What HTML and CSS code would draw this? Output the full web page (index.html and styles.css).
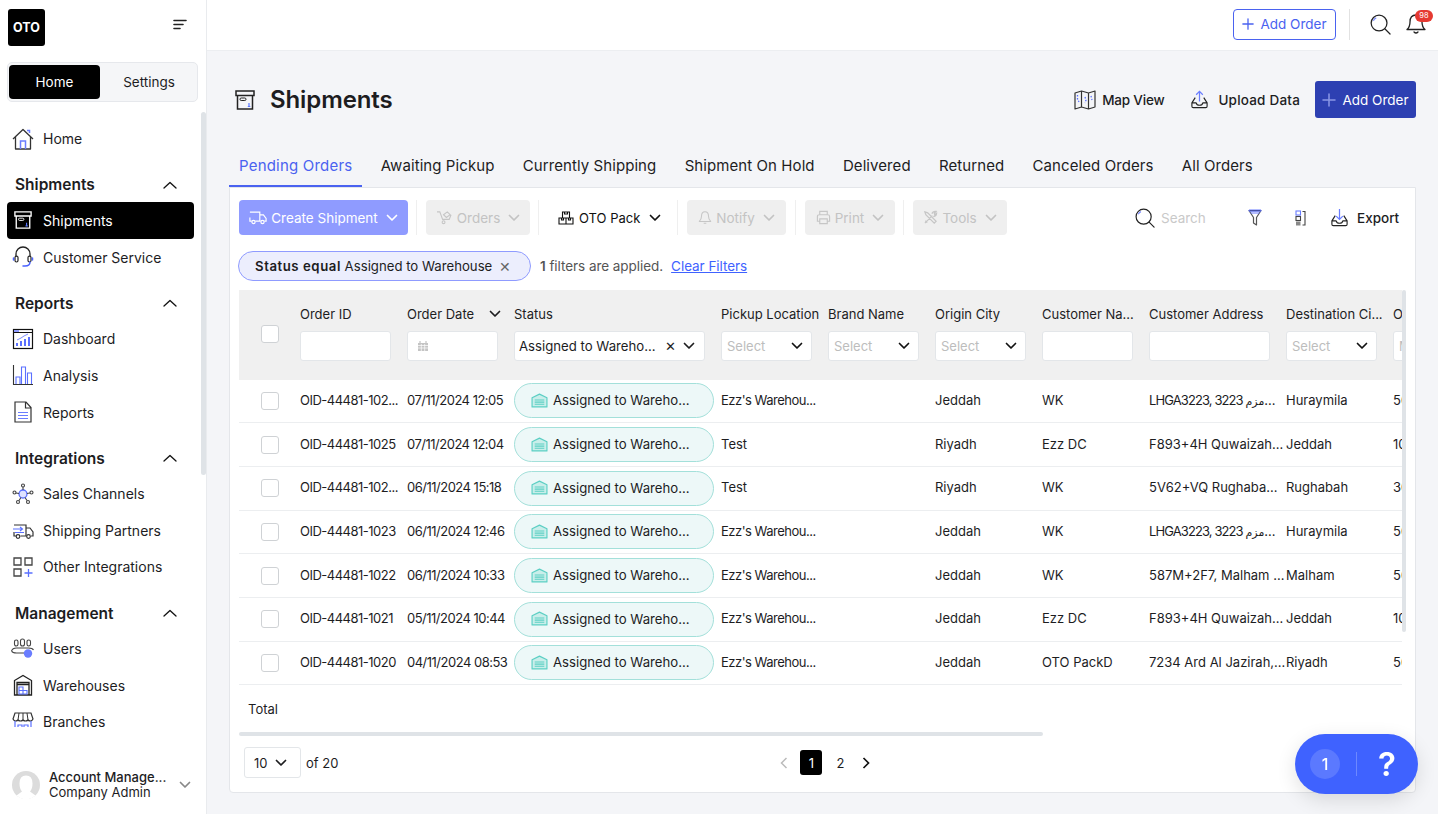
FILE: index.html
```html
<!DOCTYPE html>
<html lang="en">
<head>
<meta charset="utf-8">
<title>Shipments</title>
<link rel="stylesheet" href="styles.css">
</head>
<body>
<svg class="sprite" xmlns="http://www.w3.org/2000/svg">
  <symbol id="chev-d" viewBox="0 0 12 8"><path d="M1.500 1.500 6 6l4.500-4.500" fill="none" stroke="currentColor" stroke-width="1.700" stroke-linecap="round" stroke-linejoin="round"/></symbol>
  <symbol id="chev-u" viewBox="0 0 14 8"><path d="M1 7 7 1.500 13 7" fill="none" stroke="currentColor" stroke-width="1.300" stroke-linecap="round" stroke-linejoin="round"/></symbol>
  <symbol id="wh" viewBox="0 0 16 14"><path d="M1 4.500 8 1l7 3.500V13H1z" fill="#c9eeea" stroke="#5ccfc4" stroke-width="1.100" stroke-linejoin="round"/><path d="M3.500 6.500h9M3.500 8.500h9M3.500 10.500h9" stroke="#5ccfc4" stroke-width="1"/></symbol>
  <symbol id="box" viewBox="0 0 20 20"><path d="M1 1h18v4.500H1zM2.500 5.500h15V19h-15z" fill="none" stroke="currentColor" stroke-width="1.500"/><rect x="5" y="8" width="6" height="2.500" rx="1.200" fill="none" stroke="currentColor" stroke-width="1"/><path d="M14 13v3.500M12.800 16.500h2.500" stroke="#5a78ff" stroke-width="1.200"/></symbol>
  <symbol id="search" viewBox="0 0 22 22"><circle cx="9.500" cy="9.500" r="8.300" fill="none" stroke="#222" stroke-width="1.300"/><path d="m15.500 15.500 5.500 5.500" stroke="#222" stroke-width="1.300" stroke-linecap="round"/><path d="M3.500 7a6.500 6.500 0 0 1 3-3" stroke="#7c8cff" stroke-width="1.300" fill="none"/></symbol>
  <symbol id="plus" viewBox="0 0 14 14"><path d="M7 1v12M1 7h12" stroke="currentColor" stroke-width="1.500" stroke-linecap="round"/></symbol>
  <symbol id="tray" viewBox="0 0 20 20"><path d="M5.500 8 2 13.500V17q0 1.500 1.500 1.500h13q1.500 0 1.500-1.500v-3.500L14.500 8M2 13.500h4.500q.5 2.500 3.500 2.500t3.500-2.500H18" fill="none" stroke="#222" stroke-width="1.200" stroke-linejoin="round"/></symbol>
</svg>

<div class="app">
  <aside class="sidebar">
    <div class="brand">
      <div class="logo">OTO</div>
      <svg class="collapse" viewBox="0 0 14 12" width="14" height="12"><path d="M1 1.500h12M1 5.500h9M1 9.500h6" stroke="#222" stroke-width="1.600" stroke-linecap="round"/></svg>
    </div>
    <div class="switch">
      <span class="switch-on">Home</span>
      <span class="switch-off">Settings</span>
    </div>
    <nav class="nav">
      <a class="item">
        <svg class="ico" viewBox="0 0 22 22"><path d="M1 11 11 1.500 21 11M3.500 9V21h15V9" fill="none" stroke="#333" stroke-width="1.300" stroke-linejoin="round"/><path d="M8.500 21v-8h5v8M15 2.500h2.500V5" fill="none" stroke="#6a7dff" stroke-width="1.500"/></svg>
        <span>Home</span>
      </a>
      <div class="group"><b>Shipments</b><svg class="up"><use href="#chev-u"/></svg></div>
      <a class="item active"><svg class="ico"><use href="#box"/></svg><span>Shipments</span></a>
      <a class="item">
        <svg class="ico" viewBox="0 0 22 22"><path d="M4 11V8a7 7 0 0 1 14 0v3" fill="none" stroke="#222" stroke-width="1.300"/><rect x="3" y="10" width="3" height="6" rx="1.500" fill="none" stroke="#222" stroke-width="1.200"/><rect x="16" y="10" width="3" height="6" rx="1.500" fill="none" stroke="#222" stroke-width="1.200"/><path d="M1.500 12v2M20.500 12v2M18 16q0 4-5 4h-2" fill="none" stroke="#4a62ff" stroke-width="1.500" stroke-linecap="round"/></svg>
        <span>Customer Service</span>
      </a>
      <div class="group"><b>Reports</b><svg class="up"><use href="#chev-u"/></svg></div>
      <a class="item">
        <svg class="ico" viewBox="0 0 22 22"><rect x="1.500" y="1.500" width="19" height="19" fill="none" stroke="#111" stroke-width="1.200"/><path d="M1.500 4.500h19" stroke="#111"/><path d="M2 2h5v2H2z" fill="#8f9bff"/><path d="M5 18v-3M9 18v-5M13 18v-7M17 18V9" stroke="#5a70ff" stroke-width="2"/><path d="m5 12 4-2 3-2 4-2" fill="none" stroke="#5a70ff" stroke-width=".8"/></svg>
        <span>Dashboard</span>
      </a>
      <a class="item">
        <svg class="ico" viewBox="0 0 22 22"><path d="M1.500 1v19.500H21" fill="none" stroke="#333" stroke-width="1.100"/><path d="M4 20v-7h4v7M9.500 20V3h4v17M15.500 20V9h4v11" fill="none" stroke="#5a70ff" stroke-width="1.100"/></svg>
        <span>Analysis</span>
      </a>
      <a class="item">
        <svg class="ico" viewBox="0 0 22 22"><path d="M3 1h11l5 5.500V21H3zM13.500 1v6H19" fill="none" stroke="#333" stroke-width="1.200"/><path d="M6 11.500h10M6 14.500h10M6 17.500h10" stroke="#6a7dff" stroke-width="1.100"/></svg>
        <span>Reports</span>
      </a>
      <div class="group"><b>Integrations</b><svg class="up"><use href="#chev-u"/></svg></div>
      <a class="item">
        <svg class="ico" viewBox="0 0 22 22"><circle cx="11" cy="11" r="4" fill="#dfe3ff" stroke="#5a70ff" stroke-width="1.300"/><g fill="none" stroke="#444" stroke-width="1.100"><circle cx="11" cy="2.500" r="1.500"/><circle cx="2.500" cy="9.500" r="1.500"/><circle cx="19.500" cy="9.500" r="1.500"/><circle cx="6" cy="19" r="1.500"/><circle cx="16" cy="19" r="1.500"/><path d="M11 4v3M4 10l3 .5M18 10l-3 .5M7 17.500l2-3M15 17.500l-2-3"/></g></svg>
        <span>Sales Channels</span>
      </a>
      <a class="item">
        <svg class="ico" viewBox="0 0 22 22"><path d="M2 6h12v11H8.500M4 17H2v-4M14 9h4l3 4v4h-2" fill="none" stroke="#333" stroke-width="1.200"/><circle cx="6" cy="17.500" r="1.800" fill="none" stroke="#333" stroke-width="1.200"/><circle cx="16.500" cy="17.500" r="1.800" fill="none" stroke="#333" stroke-width="1.200"/><path d="M1 10h9m-2-2 2.500 2L8 12M12 13.500H3" fill="none" stroke="#5a70ff" stroke-width="1.100"/></svg>
        <span>Shipping Partners</span>
      </a>
      <a class="item">
        <svg class="ico" viewBox="0 0 22 22"><path d="M2 2h7v7H2zM13 2h7v7h-7zM2 13h7v7H2z" fill="none" stroke="#444" stroke-width="1.300"/><path d="M16.500 13v8M12.500 17h8" stroke="#5a70ff" stroke-width="1.300"/></svg>
        <span>Other Integrations</span>
      </a>
      <div class="group"><b>Management</b><svg class="up"><use href="#chev-u"/></svg></div>
      <a class="item">
        <svg class="ico ico-wide" viewBox="0 0 24 22"><g fill="none" stroke="#444" stroke-width="1.100"><rect x="4" y="3" width="3.500" height="6" rx="1.700"/><rect x="10" y="2" width="4" height="7" rx="2"/><rect x="16.500" y="3" width="3.500" height="6" rx="1.700"/><path d="M1 14q1-3 5-3h12q4 0 5 2M1 14q1 2 5 2h8"/></g><circle cx="17.500" cy="16.500" r="4.200" fill="#6a7dff"/></svg>
        <span>Users</span>
      </a>
      <a class="item">
        <svg class="ico" viewBox="0 0 22 22"><path d="M2.500 21V6.500L11 1.500l8.500 5V21z" fill="none" stroke="#222" stroke-width="1.300"/><path d="M5 21V8.500h12V21M5 10.500h12" fill="none" stroke="#222" stroke-width="1.300"/><path d="M7 13h4v3.500H7zM7 16.500h4V20H7zM11 16.500h4V20h-4z" fill="none" stroke="#5a70ff" stroke-width="1.100"/></svg>
        <span>Warehouses</span>
      </a>
      <a class="item">
        <svg class="ico" viewBox="0 0 22 22"><path d="M3 2h16l2 6q-1 2-2.500 2t-2.500-1q-1 1-2.500 1T11 9q-1 1-2.500 1T6 9q-1 1-2.500 1T1 8z" fill="none" stroke="#333" stroke-width="1.200"/><path d="M7 2 6 9M11 2v7M15 2l1 7" stroke="#333"/><path d="M3 10v10h16V10M6 14h4v6H6zM12 14h4v6h-4z" fill="none" stroke="#5a70ff" stroke-width="1.200"/></svg>
        <span>Branches</span>
      </a>
    </nav>
    <div class="account">
      <svg class="avatar" viewBox="0 0 28 28"><circle cx="14" cy="14" r="14" fill="#dcdcdc"/><path d="M14 4.500q6.500 0 6.500 8 0 5.500-2.500 8l5.500 4a14 14 0 0 1-19 0l5.500-4q-2.500-2.500-2.500-8 0-8 6.500-8" fill="#fff"/></svg>
      <div class="who">
        <div class="who-name">Account Manage...</div>
        <div class="who-role">Company Admin</div>
      </div>
      <svg class="who-chev"><use href="#chev-d"/></svg>
    </div>
  </aside>

  <div class="main">
    <header class="topbar">
      <a class="btn-outline"><svg class="plus"><use href="#plus"/></svg>Add Order</a>
      <span class="top-sep"></span>
      <svg class="top-search"><use href="#search"/></svg>
      <span class="bell">
        <svg viewBox="0 0 20 22" width="20" height="22"><path d="M10 2q-6 0-6 7 0 5-3 7.500h18Q16 14 16 9q0-7-6-7zM8 19q2 2 4 0" fill="none" stroke="#222" stroke-width="1.300" stroke-linejoin="round" stroke-linecap="round"/></svg>
        <span class="badge">98</span>
      </span>
    </header>

    <div class="content">
      <div class="page-head">
        <svg class="page-ico"><use href="#box"/></svg>
        <h1>Shipments</h1>
        <div class="page-actions">
          <a class="act act-map">
            <svg viewBox="0 0 22 20" width="22" height="20"><path d="M1 3l6.500-2 7 2L21 1v16l-6.500 2-7-2L1 19zM7.500 1v16M14.500 3v16" fill="none" stroke="#333" stroke-width="1.200" stroke-linejoin="round"/><path d="M3.500 5v4l1.500 3M11 7l1 3-1 3M17 6l1 4" fill="none" stroke="#5a70ff" stroke-width="1.300" stroke-dasharray="1.500 1.500"/></svg>
            Map View
          </a>
          <a class="act act-upload">
            <svg viewBox="0 0 20 20" width="19" height="19"><use href="#tray"/><path d="M10 12V2M6.500 5 10 1.500 13.500 5" fill="none" stroke="#6a7dff" stroke-width="1.300"/></svg>
            Upload Data
          </a>
          <a class="btn-primary"><svg class="plus-lg"><use href="#plus"/></svg>Add Order</a>
        </div>
      </div>

      <div class="tabs">
        <a class="tab on">Pending Orders</a>
        <a class="tab">Awaiting Pickup</a>
        <a class="tab">Currently Shipping</a>
        <a class="tab">Shipment On Hold</a>
        <a class="tab">Delivered</a>
        <a class="tab">Returned</a>
        <a class="tab">Canceled Orders</a>
        <a class="tab">All Orders</a>
      </div>

      <section class="card">
        <div class="toolbar">
          <a class="tool tool-create">
            <svg viewBox="0 0 20 16" width="18" height="15"><path d="M1 2h11v10H7M3 12H1V8M12 5h4l3 4v3h-2M12 12h1" fill="none" stroke="#fff" stroke-width="1.300"/><circle cx="5" cy="13" r="1.800" fill="none" stroke="#fff" stroke-width="1.300"/><circle cx="15" cy="13" r="1.800" fill="none" stroke="#fff" stroke-width="1.300"/></svg>
            Create Shipment<svg class="chev"><use href="#chev-d"/></svg>
          </a>
          <span class="tsep"></span>
          <a class="tool tool-off tool-orders">
            <svg viewBox="0 0 18 16" width="17" height="15"><path d="M1 2h3l3 8h7l2-5M8 5l4-3 3 3-4 3z" fill="none" stroke="#c6c6c6" stroke-width="1.200"/><circle cx="8" cy="13" r="1.500" fill="none" stroke="#c6c6c6" stroke-width="1.200"/></svg>
            Orders<svg class="chev"><use href="#chev-d"/></svg>
          </a>
          <span class="tsep"></span>
          <a class="tool tool-pack">
            <svg viewBox="0 0 16 14" width="16" height="14"><path d="M1 7h7v6H1zM8 7h7v6H8zM4.500 1h7v6h-7zM6.500 1v2h3V1M3.500 7v2h2V7M10.500 7v2h2V7" fill="none" stroke="#111" stroke-width="1.100"/></svg>
            OTO Pack<svg class="chev"><use href="#chev-d"/></svg>
          </a>
          <span class="tsep"></span>
          <a class="tool tool-off tool-notify">
            <svg viewBox="0 0 16 16" width="14" height="15"><path d="M8 1.500q-4 0-4 5 0 3.500-2.500 6h13Q12 10 12 6.500q0-5-4-5zM6.500 14.500h3" fill="none" stroke="#c6c6c6" stroke-width="1.200" stroke-linejoin="round"/></svg>
            Notify<svg class="chev"><use href="#chev-d"/></svg>
          </a>
          <span class="tsep tsep-wide"></span>
          <a class="tool tool-off tool-print">
            <svg viewBox="0 0 16 16" width="15" height="15"><path d="M4 5V1.500h8V5M4 12H1.500V7q0-2 2-2h9q2 0 2 2v5H12M4 9.500h8v5H4z" fill="none" stroke="#c6c6c6" stroke-width="1.200"/></svg>
            Print<svg class="chev"><use href="#chev-d"/></svg>
          </a>
          <span class="tsep"></span>
          <a class="tool tool-off tool-tools">
            <svg viewBox="0 0 16 16" width="15" height="15"><path d="m2 14 8-8M2 2l3 1 9 9-2 2-9-9zM9.500 4q1-3 4.500-2.500L12 3.500 12.500 5l2-1.500q0 3-3.500 3.500M4.500 13.500 2.500 11.500" fill="none" stroke="#c6c6c6" stroke-width="1.300"/></svg>
            Tools<svg class="chev"><use href="#chev-d"/></svg>
          </a>
          <div class="tool-right">
            <svg class="tr-search"><use href="#search"/></svg>
            <span class="tr-placeholder">Search</span>
            <svg class="tr-filter" viewBox="0 0 14 17" width="14" height="17"><path d="M1 1.500h12L8.500 8.500V16L5.500 14V8.500z" fill="none" stroke="#555" stroke-width="1.200" stroke-linejoin="round"/><path d="M1 1h12v1.200H1zM2.500 4h9" stroke="#6a7dff" stroke-width="1"/></svg>
            <svg class="tr-cols" viewBox="0 0 11 16" width="11" height="16"><rect x="1" y="1" width="4.500" height="4" fill="none" stroke="#6a7dff" stroke-width="1.100"/><rect x="1" y="6.500" width="4.500" height="4" fill="none" stroke="#444" stroke-width="1.100"/><rect x="1" y="11.500" width="4.500" height="4" fill="#888"/><path d="M7.500 1.500H10v13.500H7.500" fill="none" stroke="#444" stroke-width="1.100"/></svg>
            <a class="tr-export">
              <svg viewBox="0 0 20 20" width="19" height="19"><use href="#tray"/><path d="M10 1v11M6.500 8.500 10 12l3.500-3.500" fill="none" stroke="#6a7dff" stroke-width="1.300"/></svg>
              Export
            </a>
          </div>
        </div>

        <div class="filters">
          <span class="chip"><b>Status equal</b> Assigned to Warehouse <i class="chip-x">✕</i></span>
          <span class="applied"><b>1</b> filters are applied.</span>
          <a class="clear">Clear Filters</a>
        </div>

        <div class="table-wrap">
          <div class="table-clip">
            <div class="thead row-grid">
              <div class="th th-check"><span class="check"></span></div>
              <div class="th"><label>Order ID</label><span class="inp"></span></div>
              <div class="th"><label class="sortable">Order Date<svg class="chev"><use href="#chev-d"/></svg></label>
                <span class="inp"><svg class="cal" viewBox="0 0 12 12" width="12" height="12"><path d="M1 3h10v8H1z" fill="#c4c4c4"/><path d="M3 1v2M9 1v2" stroke="#c4c4c4" stroke-width="1.200"/><path d="M1 5.500h10M1 8h10M4.300 4v7M7.700 4v7" stroke="#fff" stroke-width=".7"/></svg></span></div>
              <div class="th"><label>Status</label><span class="inp inp-status"><em>Assigned to Wareho...</em><i class="x">✕</i><svg class="chev"><use href="#chev-d"/></svg></span></div>
              <div class="th"><label>Pickup Location</label><span class="inp inp-sel">Select<svg class="chev"><use href="#chev-d"/></svg></span></div>
              <div class="th"><label>Brand Name</label><span class="inp inp-sel">Select<svg class="chev"><use href="#chev-d"/></svg></span></div>
              <div class="th"><label>Origin City</label><span class="inp inp-sel">Select<svg class="chev"><use href="#chev-d"/></svg></span></div>
              <div class="th"><label>Customer Na...</label><span class="inp"></span></div>
              <div class="th"><label>Customer Address</label><span class="inp inp-addr"></span></div>
              <div class="th"><label>Destination Ci...</label><span class="inp inp-sel">Select<svg class="chev"><use href="#chev-d"/></svg></span></div>
              <div class="th"><label>Order Amount</label><span class="inp inp-sel">Min</span></div>
            </div>

            <div class="tr row-grid">
              <div class="td-check"><span class="check"></span></div><div class="td td-n">OID-44481-102...</div><div class="td td-n">07/11/2024 12:05</div>
              <div><span class="pill"><svg class="pill-ico"><use href="#wh"/></svg>Assigned to Wareho...</span></div>
              <div class="td td-n">Ezz's Warehou...</div><div class="td"></div><div class="td">Jeddah</div><div class="td">WK</div><div class="td td-a">LHGA3223, 3223 <span class="ar">مزم</span>...</div><div class="td">Huraymila</div><div class="td">50.00</div>
            </div>
            <div class="tr row-grid">
              <div class="td-check"><span class="check"></span></div><div class="td td-n">OID-44481-1025</div><div class="td td-n">07/11/2024 12:04</div>
              <div><span class="pill"><svg class="pill-ico"><use href="#wh"/></svg>Assigned to Wareho...</span></div>
              <div class="td">Test</div><div class="td"></div><div class="td">Riyadh</div><div class="td">Ezz DC</div><div class="td">F893+4H Quwaizah...</div><div class="td">Jeddah</div><div class="td">10.00</div>
            </div>
            <div class="tr row-grid">
              <div class="td-check"><span class="check"></span></div><div class="td td-n">OID-44481-102...</div><div class="td td-n">06/11/2024 15:18</div>
              <div><span class="pill"><svg class="pill-ico"><use href="#wh"/></svg>Assigned to Wareho...</span></div>
              <div class="td">Test</div><div class="td"></div><div class="td">Riyadh</div><div class="td">WK</div><div class="td">5V62+VQ Rughaba...</div><div class="td">Rughabah</div><div class="td">30.00</div>
            </div>
            <div class="tr row-grid">
              <div class="td-check"><span class="check"></span></div><div class="td td-n">OID-44481-1023</div><div class="td td-n">06/11/2024 12:46</div>
              <div><span class="pill"><svg class="pill-ico"><use href="#wh"/></svg>Assigned to Wareho...</span></div>
              <div class="td td-n">Ezz's Warehou...</div><div class="td"></div><div class="td">Jeddah</div><div class="td">WK</div><div class="td td-a">LHGA3223, 3223 <span class="ar">مزم</span>...</div><div class="td">Huraymila</div><div class="td">50.00</div>
            </div>
            <div class="tr row-grid">
              <div class="td-check"><span class="check"></span></div><div class="td td-n">OID-44481-1022</div><div class="td td-n">06/11/2024 10:33</div>
              <div><span class="pill"><svg class="pill-ico"><use href="#wh"/></svg>Assigned to Wareho...</span></div>
              <div class="td td-n">Ezz's Warehou...</div><div class="td"></div><div class="td">Jeddah</div><div class="td">WK</div><div class="td">587M+2F7, Malham ...</div><div class="td">Malham</div><div class="td">50.00</div>
            </div>
            <div class="tr row-grid">
              <div class="td-check"><span class="check"></span></div><div class="td td-n">OID-44481-1021</div><div class="td td-n">05/11/2024 10:44</div>
              <div><span class="pill"><svg class="pill-ico"><use href="#wh"/></svg>Assigned to Wareho...</span></div>
              <div class="td td-n">Ezz's Warehou...</div><div class="td"></div><div class="td">Jeddah</div><div class="td">Ezz DC</div><div class="td">F893+4H Quwaizah...</div><div class="td">Jeddah</div><div class="td">10.00</div>
            </div>
            <div class="tr row-grid">
              <div class="td-check"><span class="check"></span></div><div class="td td-n">OID-44481-1020</div><div class="td td-n">04/11/2024 08:53</div>
              <div><span class="pill"><svg class="pill-ico"><use href="#wh"/></svg>Assigned to Wareho...</span></div>
              <div class="td td-n">Ezz's Warehou...</div><div class="td"></div><div class="td">Jeddah</div><div class="td">OTO PackD</div><div class="td">7234 Ard Al Jazirah,...</div><div class="td">Riyadh</div><div class="td">50.00</div>
            </div>

            <div class="total">Total</div>
          </div>
          <span class="vscroll"></span>
        </div>
        <div class="hscroll"><span></span></div>

        <div class="pager-row">
          <span class="size">10<svg class="chev"><use href="#chev-d"/></svg></span>
          <span class="of">of 20</span>
          <div class="pager">
            <svg class="pg-arrow pg-prev" viewBox="0 0 8 12" width="8" height="12"><path d="M6.500 1 1.500 6l5 5" fill="none" stroke="#bbb" stroke-width="1.500"/></svg>
            <span class="pg pg-on">1</span>
            <span class="pg pg-two">2</span>
            <svg class="pg-arrow" viewBox="0 0 8 12" width="8" height="12"><path d="m1.500 1 5 5-5 5" fill="none" stroke="#111" stroke-width="1.700"/></svg>
          </div>
        </div>
      </section>
    </div>
  </div>
</div>

<div class="help">
  <span class="help-count">1</span>
  <span class="help-sep"></span>
  <span class="help-q">?</span>
</div>
</body>
</html>
```

FILE: styles.css
```css
* { box-sizing: border-box; }
html, body { margin: 0; height: 100%; }
body {
  width: 1438px; height: 814px; overflow: hidden;
  font-family: Inter, "Noto Sans", sans-serif;
  font-size: 13.5px; color: #1d1d1f; background: #f4f5f8;
}
a { color: inherit; text-decoration: none; }
.sprite { display: none; }
.app { display: flex; height: 814px; }

/* sidebar */
.sidebar { width: 207px; flex: none; background: #fff; border-right: 1px solid #e9ebee; display: flex; flex-direction: column; }
.brand { height: 62px; padding: 9px 19px 0 8px; display: flex; justify-content: space-between; align-items: flex-start; flex: none; }
.logo { width: 37px; height: 37px; background: #000; color: #fff; border-radius: 3px; font-weight: 700; font-size: 12.500px; display: flex; align-items: center; justify-content: center; }
.collapse { margin-top: 10px; }
.switch { flex: none; margin: 0 8px 0 7px; height: 40px; border: 1px solid #e6e8ec; border-radius: 5px; background: #f5f6f8; padding: 2px 1px; display: flex; align-items: stretch; }
.switch span { display: flex; align-items: center; justify-content: center; }
.switch-on { width: 91px; background: #000; color: #fff; border-radius: 4px; }
.switch-off { flex: 1; padding-left: 2px; }
.nav { flex: none; height: 615px; margin-top: 10px; overflow: hidden; padding: 0 12px 0 7px; position: relative; }
.nav::after { content: ""; position: absolute; top: 0; right: 0; width: 5px; height: 363px; background: #dfe3e7; border-radius: 3px; }
.item { height: 36.700px; display: flex; align-items: center; gap: 9px; padding-left: 5px; border-radius: 4px; font-size: 14px; }
.item:first-child { margin-top: 8.500px; }
.item.active { background: #000; color: #fff; height: 37px; }
.ico { width: 22px; height: 22px; flex: none; }
.item.active .ico { color: #fff; width: 18px; height: 18px; margin: 0 2px; }
.ico-wide { width: 25px; margin: 0 -1px 0 -2px; }
.group { height: 28px; margin: 13.750px 0 3px; padding: 0 17px 0 8px; display: flex; justify-content: space-between; align-items: center; font-size: 15.500px; }
.group b { font-weight: 600; }
.up { width: 14px; height: 8px; color: #111; }
.account { flex: 1; display: flex; align-items: center; padding: 0 15px 0 12px; gap: 9px; margin-top: 28px; }
.avatar { width: 28px; height: 28px; flex: none; }
.who { flex: 1; min-width: 0; line-height: 15px; font-size: 13px; white-space: nowrap; }
.who-name { font-weight: 500; }
.who-chev { width: 12px; height: 8px; color: #888; flex: none; }

/* main */
.main { flex: 1; min-width: 0; display: flex; flex-direction: column; }
.topbar { height: 51px; flex: none; background: #fff; border-bottom: 1px solid #eceef1; display: flex; align-items: center; padding: 0 1px 2px 0; justify-content: flex-end; }
.btn-outline { width: 103px; height: 31px; border: 1px solid #4a62f0; border-radius: 4px; color: #4a62f0; display: flex; align-items: center; justify-content: center; gap: 6px; font-size: 13.500px; }
.plus { width: 12px; height: 12px; }
.top-sep { width: 1px; height: 31px; background: #e2e2e2; margin: 0 20px 0 13px; }
.top-search { width: 21px; height: 21px; margin-right: 15px; }
.bell { position: relative; width: 31px; height: 22px; }
.badge { position: absolute; left: 9px; top: -3px; width: 18px; height: 12px; border-radius: 6px; background: #e53a32; color: #fff; font-size: 7.500px; line-height: 12px; text-align: center; }

.content { flex: 1; padding: 30px 22px 21px 22px; display: flex; flex-direction: column; min-height: 0; }
.page-head { height: 37px; flex: none; display: flex; align-items: center; padding-left: 6px; }
.page-ico { width: 20px; height: 20px; color: #222; margin-right: 15px; }
h1 { margin: 0; font-size: 24px; font-weight: 600; letter-spacing: -.1px; }
.page-actions { margin-left: auto; display: flex; align-items: center; }
.act { display: flex; align-items: center; font-size: 13.500px; font-weight: 500; gap: 8px; }
.act-map { margin-right: 26px; gap: 6px; letter-spacing: -.2px; }
.act-upload { margin-right: 15px; gap: 9px; letter-spacing: .2px; }
.btn-primary { width: 101px; height: 37px; background: #2d40b2; color: #fff; border-radius: 3px; display: flex; align-items: center; justify-content: center; gap: 6px; font-size: 13.500px; }
.plus-lg { width: 14px; height: 14px; color: #8a97e6; }

.tabs { height: 37px; margin-top: 32px; flex: none; display: flex; gap: 8.300px; align-items: stretch; }
.tab { padding: 0 10px 5px; display: flex; align-items: center; font-size: 15px; letter-spacing: .08px; border-bottom: 2px solid transparent; }
.tab.on { color: #4a62f0; border-bottom-color: #4a62f0; letter-spacing: .2px; }

.card { flex: 1; min-height: 0; background: #fff; border: 1px solid #e4e6ea; border-radius: 0 0 4px 4px; padding: 12px 9px 0; display: flex; flex-direction: column; }
.toolbar { height: 35px; flex: none; display: flex; align-items: center; }
.tool { height: 35px; border-radius: 4px; display: flex; align-items: center; justify-content: center; gap: 4px; font-size: 13.500px; white-space: nowrap; }
.chev { width: 12px; height: 8px; flex: none; }
.tool .chev { margin-left: 4px; }
.tool-create { width: 169px; background: #8f9bff; color: #fff; }
.tool-off { background: #efefef; color: #c3c3c3; }
.tool-orders { width: 104px; }
.tool-pack { width: 129px; color: #111; font-size: 13px; gap: 5px; justify-content: flex-start; padding-left: 10px; }
.tool-notify { width: 99px; }
.tool-print { width: 90px; }
.tool-tools { width: 94px; }
.tsep { width: 1px; height: 35px; background: #efefef; margin: 0 9px 0 8px; }
.tool-pack + .tsep { margin: 0 9px 0 0; }
.tsep-wide { margin: 0 9px; }
.tool-right { flex: 1; display: flex; align-items: center; }
.tr-search { width: 20px; height: 20px; margin-left: 128px; }
.tr-placeholder { color: #c9c9c9; margin-left: 6px; width: 87px; }
.tr-filter { margin-right: 33px; }
.tr-cols { margin-right: 24px; }
.tr-export { display: flex; align-items: center; gap: 8px; font-weight: 500; }

.filters { height: 30px; margin-top: 16px; flex: none; display: flex; align-items: center; font-size: 13.500px; margin-left: -1px; }
.chip { height: 30px; width: 293px; border: 1px solid #8f9bff; background: #eceefd; border-radius: 15px; padding-left: 16px; display: flex; align-items: center; white-space: pre; font-size: 13.200px; }
.chip b { font-weight: 600; letter-spacing: .55px; }
.chip-x { font-style: normal; color: #666; font-size: 14px; margin-left: 3px; }
.applied { margin-left: 9px; color: #555; letter-spacing: -.05px; }
.applied b { font-weight: 600; }
.clear { color: #3f62ff; text-decoration: underline; margin-left: 8px; letter-spacing: -.05px; }

.table-wrap { margin-top: 9px; flex: none; height: 442px; position: relative; width: 1167px; }
.table-clip { width: 1163px; height: 442px; overflow: hidden; }
.row-grid { display: grid; grid-template-columns: 61px 107px 107px 207px 107px 107px 107px 107px 137px 107px 120px; width: 1270px; }
.thead { height: 89.500px; background: #f0f0f0; }
.th { padding-top: 16px; font-size: 13px; white-space: nowrap; }
.th label { display: flex; height: 16px; align-items: center; justify-content: space-between; padding-right: 13px; line-height: 16px; }
.th-check { padding: 35px 0 0 22px; }
.inp { display: flex; align-items: center; margin-top: 9px; height: 30px; width: 91px; background: #fff; border: 1px solid #e3e6e9; border-radius: 3px; padding: 0 5px 0 10px; }
.inp-status { width: 191px; padding: 0 9px 0 4px; font-size: 13.200px; }
.inp-status em { font-style: normal; flex: 1; }
.x { font-style: normal; font-size: 13px; margin-right: 7px; }
.inp-sel { color: #bdbdbd; justify-content: space-between; padding: 0 8px 0 5px; }
.inp-sel .chev { color: #111; }
.inp-addr { width: 121px; }
.cal { margin-left: -1px; }
.check { display: block; width: 18px; height: 18px; border: 1px solid #cfd2d5; border-radius: 3px; background: #fff; }
.tr { height: 43.700px; border-bottom: 1px solid #eceef0; align-items: center; width: 1163px; overflow: hidden; }
.td { font-size: 13px; white-space: nowrap; overflow: hidden; padding-bottom: 2px; }
.td-n { letter-spacing: -.5px; }
.td-a { letter-spacing: -.9px; }
.td-check { padding-left: 22px; }
.pill { display: flex; align-items: center; width: 200px; height: 35px; background: #edf8f8; border: 1px solid #a3e0da; border-radius: 18px; padding: 0 0 1px 16px; font-size: 13.200px; white-space: nowrap; }
.pill-ico { width: 17px; height: 15px; margin-right: 5px; }
.ar { font-family: "DejaVu Sans", sans-serif; font-size: 11px; letter-spacing: 0; }
.total { height: 47px; padding: 16px 0 0 9px; font-size: 13px; }
.vscroll { position: absolute; top: 0; right: 0; width: 4px; height: 342px; background: #dfe3e7; border-radius: 2px; }

.hscroll { height: 4px; flex: none; width: 804px; }
.hscroll span { display: block; height: 4px; background: #dfe3e7; border-radius: 2px; }
.pager-row { flex: 1; display: flex; align-items: center; padding: 0 0 3px 5px; font-size: 13px; }
.size { width: 57px; height: 31px; border: 1px solid #e3e6e9; border-radius: 3px; display: flex; align-items: center; justify-content: space-between; padding: 0 13px 0 9px; }
.of { margin-left: 5px; }
.pager { margin-left: 442px; display: flex; align-items: center; }
.pg { width: 22px; height: 25px; display: flex; align-items: center; justify-content: center; border-radius: 3px; }
.pg-on { background: #000; color: #fff; margin-right: 7px; }
.pg-prev { margin-right: 12px; }
.pg-two { margin-right: 11px; }

.help { position: fixed; left: 1295px; top: 734px; width: 123px; height: 60px; border-radius: 30px; background: #3f62ff; color: #fff; display: flex; align-items: center; box-shadow: 0 6px 20px rgba(0,0,0,.12); padding-left: 15px; }
.help-count { width: 30px; height: 30px; border-radius: 50%; background: #5b79ff; display: flex; align-items: center; justify-content: center; font-size: 16px; font-weight: 500; }
.help-sep { width: 1px; height: 24px; background: #6d88ff; margin: 0 21px 0 16px; }
.help-q { font-size: 33px; font-weight: 600; }
```
